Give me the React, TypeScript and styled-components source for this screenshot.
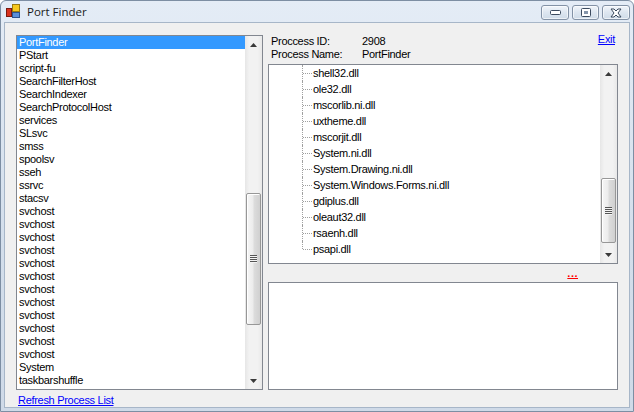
import { FunctionComponent } from 'react';
import styled, { createGlobalStyle } from 'styled-components';

const GlobalStyle = createGlobalStyle`
	html, body {
		margin: 0;
		padding: 0;
		overflow: hidden;
		background: #ffffff;
	}
`;

const Window = styled.div`
	width: 634px;
	height: 412px;
	box-sizing: border-box;
	display: flex;
	flex-direction: column;
	border: 1px solid #7d8ea3;
	border-radius: 6px 6px 0 0;
	padding: 0 3px 3px 3px;
	background: linear-gradient(#e4ecf6, #d3deeb 60%, #cfdae8);
	font-family: 'Liberation Sans', Arial, sans-serif;
	font-size: 11px;
	letter-spacing: -0.3px;
	color: #000000;
`;

const TitleBar = styled.div`
	height: 21px;
	display: flex;
	align-items: center;
	padding-left: 2px;
`;

const AppTitle = styled.span`
	font-family: 'Open Sans', 'Noto Sans', sans-serif;
	font-size: 11.5px;
	letter-spacing: 0;
	color: #1b1b1b;
	margin-left: 6px;
	flex: 1;
`;

const CaptionButtons = styled.div`
	display: flex;
	gap: 3px;
	align-self: flex-start;
	margin-top: 4px;
`;

const CaptionButton = styled.div<{ $w: number }>`
	width: ${(p) => p.$w}px;
	height: 15px;
	box-sizing: border-box;
	border: 1px solid #8392a6;
	border-radius: 3px;
	background: linear-gradient(#f1f5fa, #dde6f0 50%, #cfdbe8);
	box-shadow: inset 0 0 0 1px rgba(255, 255, 255, 0.6);
	display: flex;
	align-items: center;
	justify-content: center;
`;

const Client = styled.div`
	flex: 1;
	display: flex;
	gap: 5px;
	background: #f0f0f0;
	border: 1px solid #a7b6c8;
	padding: 12px 11px 0 11px;
	min-height: 0;
`;

const LeftColumn = styled.div`
	width: 247px;
	display: flex;
	flex-direction: column;
`;

const RightColumn = styled.div`
	width: 350px;
	display: flex;
	flex-direction: column;
`;

const ListBox = styled.div<{ $h: number }>`
	height: ${(p) => p.$h}px;
	box-sizing: border-box;
	border: 1px solid #828790;
	background: #ffffff;
	display: flex;
	overflow: hidden;
`;

const Items = styled.div`
	flex: 1;
	min-width: 0;
`;

const Item = styled.div<{ $selected?: boolean }>`
	height: 13px;
	line-height: 13px;
	padding-left: 2px;
	white-space: nowrap;
	background: ${(p) => (p.$selected ? '#3399ff' : 'transparent')};
	color: ${(p) => (p.$selected ? '#ffffff' : '#000000')};
`;

const ScrollBar = styled.div`
	width: 17px;
	flex-shrink: 0;
	display: flex;
	flex-direction: column;
	background: linear-gradient(to right, #e6e6e6, #f2f2f2 25%, #f2f2f2 75%, #e8e8e8);
`;

const ArrowButton = styled.div`
	height: 17px;
	flex-shrink: 0;
	display: flex;
	align-items: center;
	justify-content: center;
`;

const Track = styled.div`
	flex: 1;
`;

const Thumb = styled.div<{ $offset: number; $size: number }>`
	margin: ${(p) => p.$offset}px 1px 0 1px;
	height: ${(p) => p.$size}px;
	box-sizing: border-box;
	border: 1px solid #979797;
	border-radius: 2px;
	background: linear-gradient(to right, #f6f6f6, #ececec 45%, #dcdcdc 55%, #d0d0d0);
	box-shadow: inset 1px 1px 0 #ffffff;
	display: flex;
	align-items: center;
	justify-content: center;
`;

const Grip = styled.div`
	width: 7px;
	height: 8px;
	background: repeating-linear-gradient(#555555 0 1px, #f4f4f4 1px 2px);
`;

const LinkText = styled.span<{ $color?: string }>`
	color: ${(p) => p.$color || '#0000ff'};
	text-decoration: underline;
	cursor: pointer;
`;

const BottomLink = styled.div`
	margin-top: 4px;
	padding-left: 2px;
	line-height: 13px;
`;

const Header = styled.div`
	display: flex;
	align-items: flex-start;
	padding-left: 3px;
`;

const InfoGrid = styled.div`
	flex: 1;
	display: grid;
	grid-template-columns: 91px 1fr;
	line-height: 13px;
`;

const ExitLink = styled.div`
	margin-top: -2px;
	margin-right: 3px;
	line-height: 13px;
`;

const TreeBox = styled(ListBox)`
	margin-top: 3px;
`;

const TreeRows = styled.div`
	flex: 1;
	padding-left: 33px;
`;

const TreeRow = styled.div`
	height: 16px;
	display: flex;
	align-items: center;
	white-space: nowrap;
`;

const Branch = styled.span<{ $last?: boolean }>`
	position: relative;
	width: 10px;
	height: 16px;
	flex-shrink: 0;
	margin-right: 1px;

	&::before {
		content: '';
		position: absolute;
		left: 0;
		top: 0;
		height: ${(p) => (p.$last ? '8px' : '16px')};
		border-left: 1px dotted #a0a0a0;
	}

	&::after {
		content: '';
		position: absolute;
		left: 1px;
		top: 8px;
		width: 9px;
		border-top: 1px dotted #a0a0a0;
	}
`;

const DotsRow = styled.div`
	height: 18px;
	display: flex;
	justify-content: flex-end;
	align-items: center;
	padding-right: 40px;
	letter-spacing: 0.5px;
	font-weight: bold;
`;

const TextArea = styled.div`
	height: 108px;
	box-sizing: border-box;
	border: 1px solid #828790;
	background: #ffffff;
`;

const processes = [
	'PortFinder',
	'PStart',
	'script-fu',
	'SearchFilterHost',
	'SearchIndexer',
	'SearchProtocolHost',
	'services',
	'SLsvc',
	'smss',
	'spoolsv',
	'sseh',
	'ssrvc',
	'stacsv',
	...Array(12).fill('svchost'),
	'System',
	'taskbarshuffle',
];

const modules = [
	'shell32.dll',
	'ole32.dll',
	'mscorlib.ni.dll',
	'uxtheme.dll',
	'mscorjit.dll',
	'System.ni.dll',
	'System.Drawing.ni.dll',
	'System.Windows.Forms.ni.dll',
	'gdiplus.dll',
	'oleaut32.dll',
	'rsaenh.dll',
	'psapi.dll',
];

const Arrow = ({ down }: { down?: boolean }) => (
	<svg width="7" height="4" viewBox="0 0 7 4">
		<path d={down ? 'M0 0h7L3.5 4z' : 'M0 4h7L3.5 0z'} fill="#3a3a3a" />
	</svg>
);

const VScroll = ({ offset, size }: { offset: number; size: number }) => (
	<ScrollBar>
		<ArrowButton>
			<Arrow />
		</ArrowButton>
		<Track>
			<Thumb $offset={offset} $size={size}>
				<Grip />
			</Thumb>
		</Track>
		<ArrowButton>
			<Arrow down />
		</ArrowButton>
	</ScrollBar>
);

const AppIcon = () => (
	<svg width="15" height="15" viewBox="0 0 15 15">
		<rect x="6.5" y="0.5" width="7" height="7" fill="#f7c81e" stroke="#9a7a10" />
		<rect x="6.5" y="8.5" width="7" height="5" fill="#5b8fd8" stroke="#2c5390" />
		<rect x="0.5" y="4.5" width="5" height="8" fill="#d8321e" stroke="#7a1a10" />
	</svg>
);

const App: FunctionComponent = () => {
	return (
		<>
			<GlobalStyle />
			<Window>
				<TitleBar>
					<AppIcon />
					<AppTitle>Port Finder</AppTitle>
					<CaptionButtons>
						<CaptionButton $w={28}>
							<svg width="11" height="5" viewBox="0 0 11 5">
								<rect x="0.5" y="0.5" width="10" height="4" rx="1" fill="#ffffff" stroke="#3b4a5e" />
							</svg>
						</CaptionButton>
						<CaptionButton $w={27}>
							<svg width="10" height="9" viewBox="0 0 10 9">
								<rect x="0.5" y="0.5" width="9" height="8" rx="1" fill="#ffffff" stroke="#3b4a5e" />
								<rect x="3" y="3" width="4" height="3" fill="#8595aa" />
							</svg>
						</CaptionButton>
						<CaptionButton $w={28}>
							<svg width="12" height="10" viewBox="0 0 12 10">
								<path
									d="M1 1h3l2 2 2-2h3L8 5l3 4H8L6 7 4 9H1l3-4z"
									fill="#ffffff"
									stroke="#3b4a5e"
									strokeLinejoin="round"
								/>
							</svg>
						</CaptionButton>
					</CaptionButtons>
				</TitleBar>
				<Client>
					<LeftColumn>
						<ListBox $h={355}>
							<Items>
								{processes.map((name, i) => (
									<Item key={i} $selected={i === 0}>
										{name}
									</Item>
								))}
							</Items>
							<VScroll offset={140} size={132} />
						</ListBox>
						<BottomLink>
							<LinkText>Refresh Process List</LinkText>
						</BottomLink>
					</LeftColumn>
					<RightColumn>
						<Header>
							<InfoGrid>
								<span>Proccess ID:</span>
								<span>2908</span>
								<span>Process Name:</span>
								<span>PortFinder</span>
							</InfoGrid>
							<ExitLink>
								<LinkText>Exit</LinkText>
							</ExitLink>
						</Header>
						<TreeBox $h={200}>
							<TreeRows>
								{modules.map((m, i) => (
									<TreeRow key={m}>
										<Branch $last={i === modules.length - 1} />
										{m}
									</TreeRow>
								))}
							</TreeRows>
							<VScroll offset={96} size={65} />
						</TreeBox>
						<DotsRow>
							<LinkText $color="#ff0000">...</LinkText>
						</DotsRow>
						<TextArea />
					</RightColumn>
				</Client>
			</Window>
		</>
	);
};

export default App;
